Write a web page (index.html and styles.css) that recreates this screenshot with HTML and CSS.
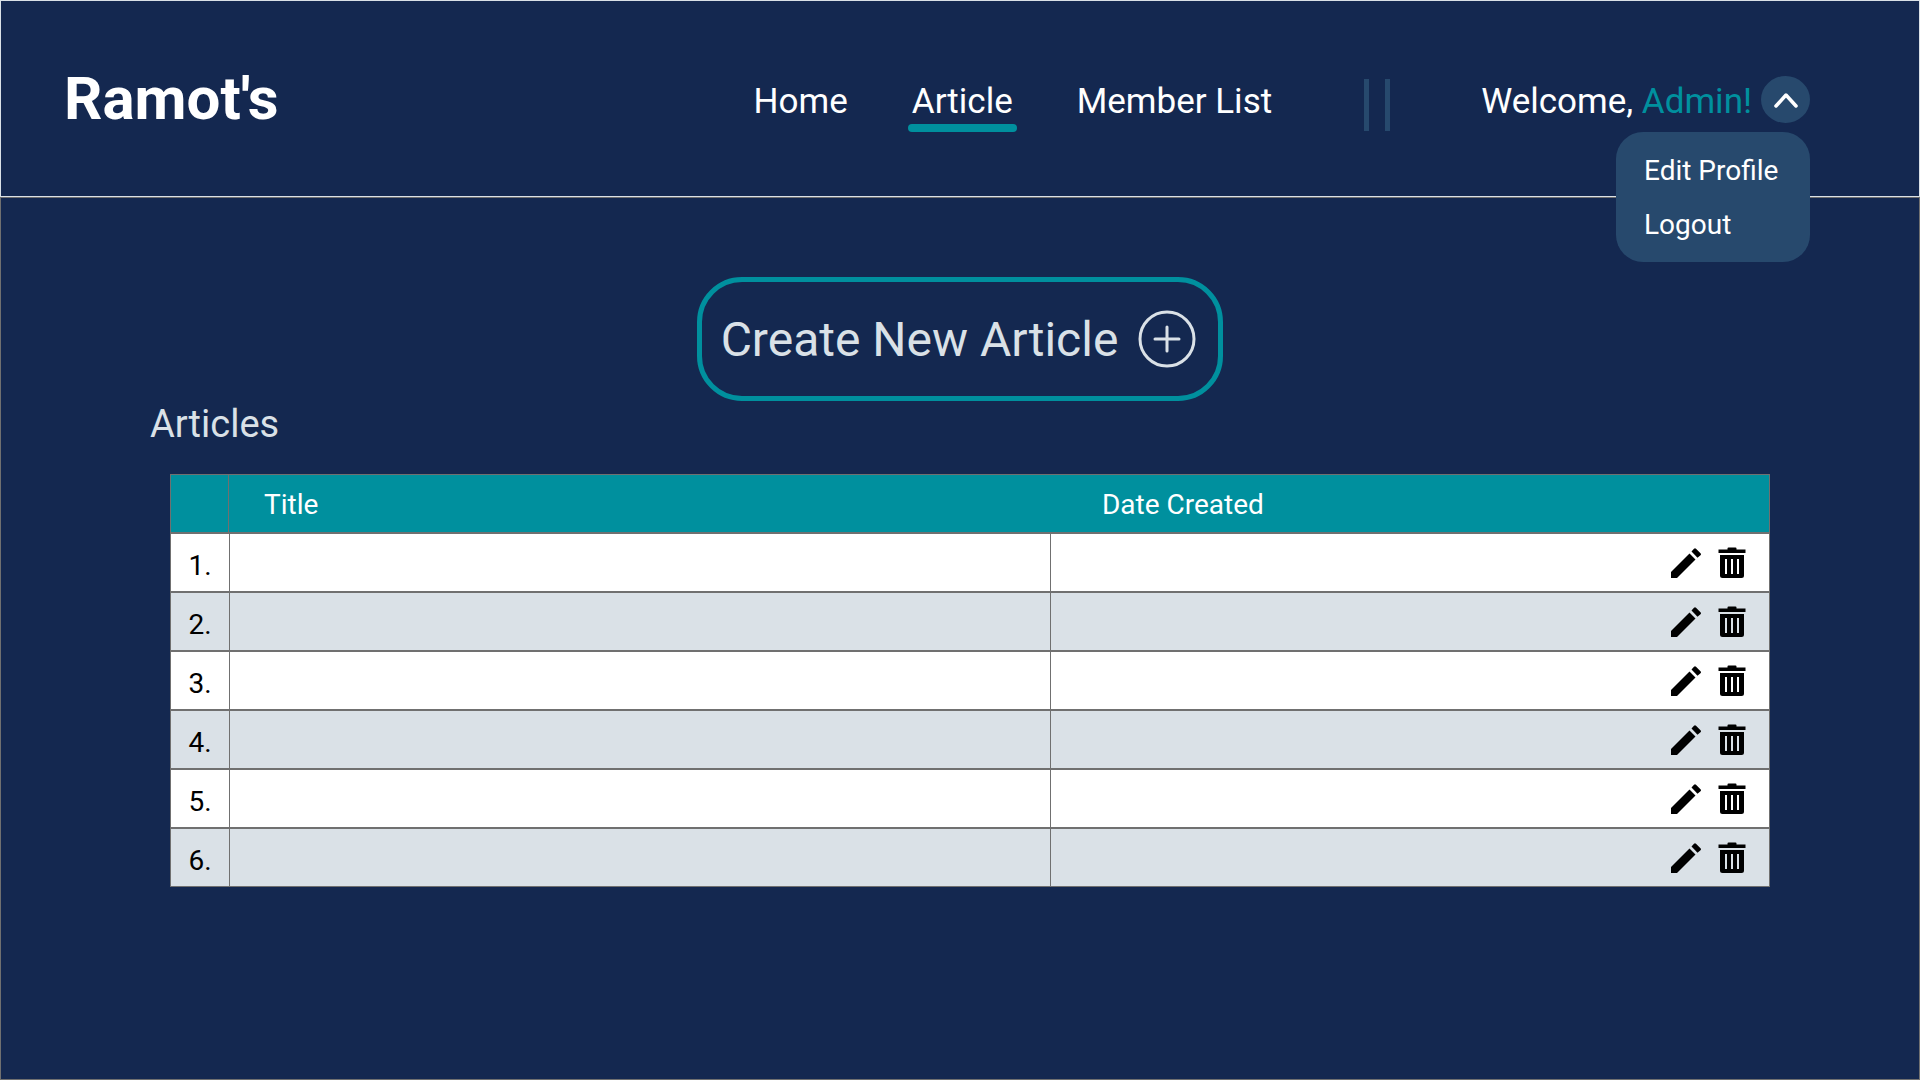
FILE: index.html
```html
<!DOCTYPE html>
<html lang="en">
<head>
<meta charset="utf-8">
<meta name="viewport" content="width=device-width, initial-scale=1">
<title>Ramot's - Articles</title>
<link rel="stylesheet" href="styles.css">
</head>
<body>
<svg class="sprite" aria-hidden="true">
  <symbol id="pencil" viewBox="0 0 30 30">
    <path d="M0 24 18.500 5.500l6 6L6 30H0zM20.500 3.500l2.500-2.800q1-1 2 0l4.500 4.500q1 1 0 2l-3 2.500z"/>
  </symbol>
  <symbol id="trash" viewBox="0 0 28 32">
    <path d="M0.500 2.500H9.500V1.500Q9.500 0.500 10.500 0.500H17.500Q18.500 0.500 18.500 1.500V2.500H27.500V6H0.500z"/>
    <path fill-rule="evenodd" d="M2 8H26V28.500Q26 31 23.500 31H4.500Q2 31 2 28.500zM7 12V27H9V12zM13 12V27H15V12zM19 12V27H21V12z"/>
  </symbol>
</svg>
<header class="header">
  <a class="logo" href="#">Ramot's</a>
  <nav class="nav">
    <a class="nav-link" href="#">Home</a>
    <a class="nav-link active" href="#">Article</a>
    <a class="nav-link" href="#">Member List</a>
  </nav>
  <div class="divider"></div>
  <div class="account">
    <p class="welcome">Welcome, <span class="user">Admin!</span></p>
    <button class="toggle" type="button" aria-label="Account menu" aria-expanded="true">
      <svg width="26" height="16" viewBox="0 0 26 16"><path d="M3 14 13 3 23 14" fill="none" stroke="#fff" stroke-width="3.500" stroke-linecap="round" stroke-linejoin="round"/></svg>
    </button>
    <div class="menu">
      <a href="#">Edit Profile</a>
      <a href="#">Logout</a>
    </div>
  </div>
</header>
<main class="main">
  <button class="create" type="button">
    <span>Create New Article</span>
    <svg width="58" height="58" viewBox="0 0 58 58" fill="none" stroke="#dae1e7" stroke-width="3"><circle cx="29" cy="29" r="27"/><path d="M29 17V41M17 29H41" stroke-linecap="round"/></svg>
  </button>
  <h1 class="heading">Articles</h1>
  <table class="articles">
    <thead>
      <tr><th class="num"></th><th class="title" scope="col">Title</th><th class="date" scope="col">Date Created</th></tr>
    </thead>
    <tbody>
      <tr><td class="num">1.</td><td></td><td><div class="actions"><button type="button" aria-label="Edit article 1"><svg width="30" height="30"><use href="#pencil"/></svg></button><button type="button" aria-label="Delete article 1"><svg width="28" height="32"><use href="#trash"/></svg></button></div></td></tr>
      <tr><td class="num">2.</td><td></td><td><div class="actions"><button type="button" aria-label="Edit article 2"><svg width="30" height="30"><use href="#pencil"/></svg></button><button type="button" aria-label="Delete article 2"><svg width="28" height="32"><use href="#trash"/></svg></button></div></td></tr>
      <tr><td class="num">3.</td><td></td><td><div class="actions"><button type="button" aria-label="Edit article 3"><svg width="30" height="30"><use href="#pencil"/></svg></button><button type="button" aria-label="Delete article 3"><svg width="28" height="32"><use href="#trash"/></svg></button></div></td></tr>
      <tr><td class="num">4.</td><td></td><td><div class="actions"><button type="button" aria-label="Edit article 4"><svg width="30" height="30"><use href="#pencil"/></svg></button><button type="button" aria-label="Delete article 4"><svg width="28" height="32"><use href="#trash"/></svg></button></div></td></tr>
      <tr><td class="num">5.</td><td></td><td><div class="actions"><button type="button" aria-label="Edit article 5"><svg width="30" height="30"><use href="#pencil"/></svg></button><button type="button" aria-label="Delete article 5"><svg width="28" height="32"><use href="#trash"/></svg></button></div></td></tr>
      <tr><td class="num">6.</td><td></td><td><div class="actions"><button type="button" aria-label="Edit article 6"><svg width="30" height="30"><use href="#pencil"/></svg></button><button type="button" aria-label="Delete article 6"><svg width="28" height="32"><use href="#trash"/></svg></button></div></td></tr>
    </tbody>
  </table>
</main>
</body>
</html>
```
FILE: styles.css
```css
* {
  box-sizing: border-box;
}

body {
  display: flex;
  flex-direction: column;
  min-height: 100vh;
  margin: 0;
  background: #142850;
  color: #fff;
  font-family: Roboto, sans-serif;
}

a {
  color: inherit;
  text-decoration: none;
}

button {
  border: 0;
  padding: 0;
  background: none;
  color: inherit;
  font: inherit;
  cursor: pointer;
}

svg {
  display: block;
}

.sprite {
  position: absolute;
  width: 0;
  height: 0;
}

.header {
  display: flex;
  align-items: flex-start;
  padding: 62px 109px 62px 63px;
  border: 1px solid #dae1e7;
}

.logo {
  margin-right: auto;
  font-size: 60px;
  font-weight: 700;
  line-height: 71px;
}

.nav {
  display: flex;
  gap: 54px;
  margin-right: 87px;
}

.nav-link {
  padding: 17px 5px 0;
  font-size: 35px;
  line-height: 44px;
}

.nav-link::after {
  content: "";
  display: block;
  height: 8px;
  margin: 0 -4px;
  border-radius: 4px;
}

.nav-link.active::after {
  background: #00909e;
}

.divider {
  width: 26px;
  height: 52px;
  margin: 16px 91px 0 0;
  border: solid #27496d;
  border-width: 0 5px;
}

.account {
  position: relative;
  display: flex;
  gap: 9px;
  padding-top: 13px;
}

.welcome {
  margin: 0;
  padding-top: 4px;
  font-size: 35px;
  line-height: 44px;
}

.user {
  color: #00909e;
}

.toggle {
  display: flex;
  align-items: center;
  justify-content: center;
  width: 49px;
  height: 47px;
  border-radius: 50%;
  background: #27496d;
}

.menu {
  position: absolute;
  top: 69px;
  right: 0;
  display: flex;
  flex-direction: column;
  width: 194px;
  padding: 12px 28px 10px;
  border-radius: 27px;
  background: #27496d;
  font-size: 28px;
  line-height: 54px;
  white-space: nowrap;
}

.main {
  flex: 1;
  display: flex;
  flex-direction: column;
  padding: 79px 149px 60px;
  border: 1px solid #707070;
}

.create {
  display: flex;
  align-items: center;
  align-self: center;
  gap: 20px;
  padding: 28px 22px 28px 19px;
  border: 5px solid #00909e;
  border-radius: 45px;
  color: #dae1e7;
  font-size: 48px;
  line-height: 56px;
}

.create span {
  padding-top: 2px;
}

.heading {
  margin: 0;
  color: #dae1e7;
  font-size: 38px;
  font-weight: 400;
  line-height: 46px;
}

.articles {
  margin: 27px 0 0 20px;
  border: solid #707070;
  border-width: 0 1px;
  border-spacing: 0;
  background: #fff;
  color: #000;
  font-size: 28px;
  line-height: 33px;
}

.articles th,
.articles td {
  height: 59px;
  padding: 0;
  border: solid #707070;
  border-width: 1px 0;
}

.articles th {
  padding-top: 2px;
  background: #00909e;
  color: #fff;
  font-weight: 400;
  text-align: left;
}

.articles td + td {
  border-left-width: 1px;
}

.articles .num {
  width: 58px;
  text-align: center;
}

.articles th.num {
  border-right-width: 1px;
}

.articles td.num {
  padding-top: 5px;
}

.articles .title {
  padding-left: 35px;
}

.articles .date {
  width: 45%;
  padding-left: 52px;
}

.articles tbody tr:nth-child(even) {
  background: #dae1e7;
}

.actions {
  display: flex;
  align-items: center;
  justify-content: flex-end;
  gap: 17px;
  padding-right: 23px;
}
```
